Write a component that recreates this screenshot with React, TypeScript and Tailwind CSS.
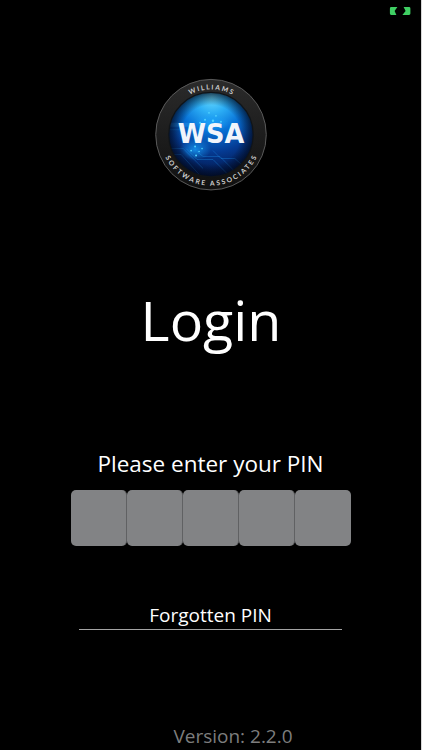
import React, { useState } from "react";

const PIN_LENGTH = 5;

const BatteryCharging: React.FC = () => (
  <svg width="22" height="10" viewBox="0 0 22 10" fill="#3fcf63">
    <path d="M2.2 1.1H8.4L5.6 5L7.4 8.9H2.2Q.9 8.9 .9 7.6V2.4Q.9 1.1 2.2 1.1Z" />
    <path d="M14.6 1.1H20Q21.4 1.1 21.4 2.4V7.6Q21.4 8.9 20 8.9H13.4L16.6 5Z" />
  </svg>
);

const Logo: React.FC = () => (
  <svg width="114" height="114" viewBox="-57 -57 114 114">
    <defs>
      <radialGradient id="glow" gradientUnits="userSpaceOnUse" cx="1" cy="-38" r="82">
        <stop offset="0" stopColor="#6bdcff" />
        <stop offset=".2" stopColor="#2caef5" />
        <stop offset=".42" stopColor="#0873d8" />
        <stop offset=".68" stopColor="#053a92" />
        <stop offset="1" stopColor="#02103c" />
      </radialGradient>
      <radialGradient id="edge">
        <stop offset=".7" stopColor="#010818" stopOpacity="0" />
        <stop offset="1" stopColor="#010818" stopOpacity=".7" />
      </radialGradient>
      <radialGradient id="spark">
        <stop offset="0" stopColor="#18a4ff" stopOpacity=".75" />
        <stop offset="1" stopColor="#18a4ff" stopOpacity="0" />
      </radialGradient>
      <linearGradient id="ring" x1="0" y1="0" x2="0" y2="1">
        <stop offset="0" stopColor="#2b2b2b" />
        <stop offset=".5" stopColor="#1d1d1d" />
        <stop offset="1" stopColor="#101010" />
      </linearGradient>
      <path id="topArc" d="M-45.5 0A45.5 45.5 0 0 1 45.5 0" />
      <path id="bottomArc" d="M-48.6 -16A51.2 51.2 0 1 0 48.6 -16" />
      <clipPath id="disc">
        <circle r="42.5" />
      </clipPath>
    </defs>
    <circle r="55.6" fill="url(#ring)" stroke="#5a5a5a" strokeWidth="1" />
    <circle r="42.5" fill="url(#glow)" />
    <g clipPath="url(#disc)">
      {/* circuit traces */}
      <path
        d="M-42 -5H-29L-24 0M-42 14H-28L-8 34M-38 20H-30L-12 40M-25 14L-14 25H2L18 41M-14 17L-8 22H9L24 37M2 16L10 24H24L34 33"
        fill="none"
        stroke="#1b86e0"
        strokeWidth=".8"
        opacity=".5"
      />
      <path d="M-42 -12H-19L-15 -8H-42Z" fill="#2b9bf0" opacity=".4" />
      <ellipse cx="-16" cy="15" rx="16" ry="11" fill="url(#spark)" />
      <ellipse cx="0" cy="-12" rx="18" ry="9" fill="url(#spark)" />
      <g fill="#4fd2ff">
        <circle cx="-6" cy="-15" r="1" />
        <circle cx="-2" cy="-22" r=".9" />
        <circle cx="2" cy="-14" r="1.2" />
        <circle cx="5" cy="-19" r=".9" />
        <circle cx="-11" cy="-12" r=".9" />
        <circle cx="10" cy="-13" r=".9" />
        <circle cx="-16" cy="12" r="1" />
        <circle cx="-20" cy="16" r=".9" />
        <circle cx="-12" cy="17" r=".8" />
        <circle cx="-15" cy="21" r="1" />
        <circle cx="-9" cy="14" r=".8" />
      </g>
    </g>
    <circle r="42.5" fill="url(#edge)" />
    <circle r="42.5" fill="none" stroke="#101418" strokeWidth="1.2" />
    <text
      y="8.6"
      textAnchor="middle"
      textLength="67"
      lengthAdjust="spacingAndGlyphs"
      fontSize="26.5"
      className="fill-[#f1f5fb] font-['DejaVu_Sans',sans-serif] font-bold"
    >
      WSA
    </text>
    <g className="fill-[#cfcfcf] font-['Lato',sans-serif] font-bold" fontSize="6.8" textAnchor="middle">
      <text letterSpacing="1.6">
        <textPath href="#topArc" startOffset="50.5%">WILLIAMS</textPath>
      </text>
      <text letterSpacing="1.95">
        <textPath href="#bottomArc" startOffset="50.5%">SOFTWARE ASSOCIATES</textPath>
      </text>
    </g>
  </svg>
);

export default function App() {
  const [pin] = useState("");

  return (
    <div className="flex h-[750px] w-[422px] flex-col items-center overflow-hidden border-r border-[#d8d8d8] bg-black font-['Open_Sans',sans-serif] text-white">
      <div className="flex h-[78px] w-full justify-end pt-[6px] pr-[10px]">
        <BatteryCharging />
      </div>

      <Logo />

      <h1 className="mt-[91px] h-[76px] pl-px text-[55.6px] leading-[76px]">Login</h1>

      <p className="mt-[90px] h-8 text-[22.5px] leading-8">Please enter your PIN</p>

      <div className="mt-[10px] flex pl-px">
        {Array.from({ length: PIN_LENGTH }, (_, i) => (
          <div
            key={i}
            className="flex size-[56.1px] items-center justify-center rounded-[5px] border-r border-[#606163] bg-[#828385] text-2xl last:border-r-0"
          >
            {pin[i] ? "•" : ""}
          </div>
        ))}
      </div>

      <button className="mt-[56px] h-[28px] w-[263px] border-b border-[#a4a4a4] pb-px text-[19px] leading-[26px]">
        Forgotten PIN
      </button>

      <p className="mt-[92px] h-[28px] pl-[45px] text-[19px] leading-[28px] text-[#7d7d7d]">
        Version: 2.2.0
      </p>
    </div>
  );
}
